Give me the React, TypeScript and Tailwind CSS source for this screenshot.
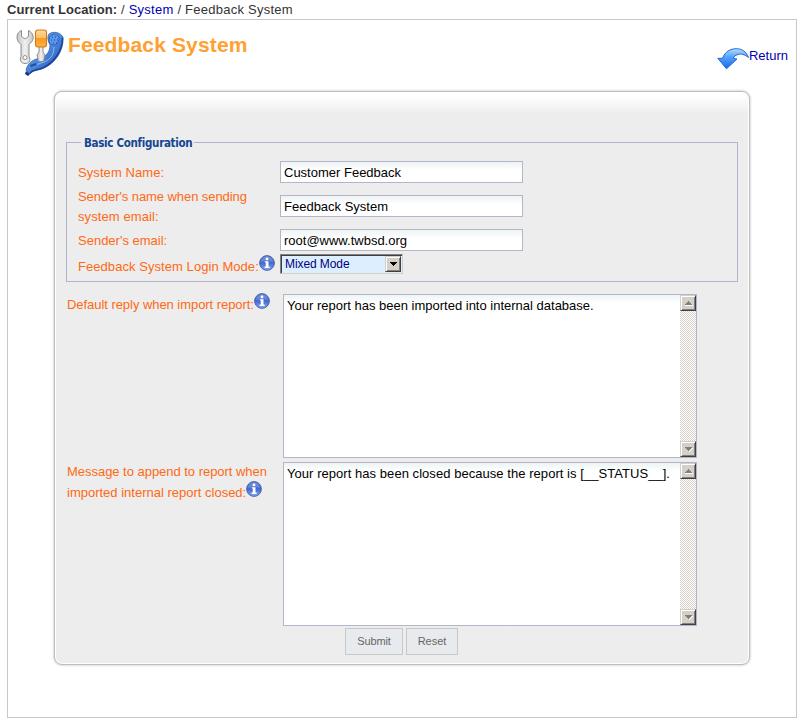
import type { ReactNode } from "react";

function InfoIcon({ className = "" }: { className?: string }) {
  return (
    <svg width="16" height="16" viewBox="0 0 16 16" className={`shrink-0 ${className}`}>
      <defs>
        <linearGradient id="info" x1="0" y1="0" x2="0" y2="1">
          <stop offset="0" stopColor="#5d7fd6" />
          <stop offset="0.5" stopColor="#4469d0" />
          <stop offset="1" stopColor="#83a8fb" />
        </linearGradient>
      </defs>
      <circle cx="8" cy="8" r="7.4" fill="url(#info)" stroke="#47609f" strokeWidth="0.9" />
      <path d="M2 7a6 5.4 0 0 1 12 0q-6-2-12 0z" fill="#fff" opacity="0.15" />
      <circle cx="8" cy="3.9" r="1.4" fill="#fff" />
      <path d="M5.8 6.2h3.7v5.400h1.100v1.400H5.600v-1.400h1.200V7.500H5.800z" fill="#fff" />
    </svg>
  );
}

function ToolsIcon() {
  return (
    <svg width="48" height="48" viewBox="0 0 48 48">
      <defs>
        <linearGradient id="steel" x1="0" x2="1">
          <stop offset="0" stopColor="#c4c4c4" />
          <stop offset="0.5" stopColor="#f0f0f0" />
          <stop offset="1" stopColor="#c6c6c6" />
        </linearGradient>
        <linearGradient id="handle" x1="0" y1="0" x2="0" y2="1">
          <stop offset="0" stopColor="#ffd9a0" />
          <stop offset="0.45" stopColor="#ffbd66" />
          <stop offset="0.5" stopColor="#f99a20" />
          <stop offset="1" stopColor="#ffb43e" />
        </linearGradient>
        <linearGradient id="phone" x1="0" y1="0" x2="1" y2="1">
          <stop offset="0" stopColor="#83b6f5" />
          <stop offset="0.55" stopColor="#4682dd" />
          <stop offset="1" stopColor="#1b429d" />
        </linearGradient>
      </defs>
      <path d="M33 5c4-3 11-2 14 3 1 14-8 26-19 31-6 3-11 1-14 6l-4-4c2-8 8-11 15-12 6-2 9-7 9-13-2-4-3-8-1-11z" fill="url(#phone)" stroke="#315faf" strokeWidth="0.8" />
      <path d="M46.500 9c0 13-9 25-19 29.500-6 3-10 1.500-13.500 5.500" fill="none" stroke="#1d4597" strokeWidth="1.600" />
      <path d="M38 18c0 9-5 14-13 16l-8 3" fill="none" stroke="#a1c8fa" strokeWidth="1" opacity="0.8" />
      <ellipse cx="38" cy="10.500" rx="5" ry="5.500" transform="rotate(30 38 10.500)" fill="#5d97e8" stroke="#2b60b8" strokeWidth="0.8" />
      <path d="M36 8h1M39 8h1M35 11h1M38 11h1M41 11h1M37 14h1M40 14h1" stroke="#174694" strokeWidth="1.200" />
      <path d="m14 36 6-2 1 2-6 2z" fill="#234e9c" />
      <path d="m10 42 4 3-2 2-3-2z" fill="#182e80" />
      <path d="M5.500 1.500v6l3.500 2.500 3.500-2.500v-6c5 2 6 8.500 3 11.500l-2.500 2.500v12c2.500 5-.5 7-4 7s-6-3-4-7V15.500L2.500 13C0 9 .5 3.500 5.500 1.500z" fill="url(#steel)" stroke="#8d8d8d" strokeWidth="1" />
      <circle cx="9" cy="28.500" r="2" fill="#fff" stroke="#777" strokeWidth="0.8" />
      <path d="M23 17h4v6l2 3-1.500 6.500h-5L21 26l2-3z" fill="url(#steel)" stroke="#888" strokeWidth="0.9" />
      <rect x="19.500" y="1" width="11" height="17" rx="2.400" fill="url(#handle)" stroke="#d07a1c" strokeWidth="1.100" />
    </svg>
  );
}

function ReturnIcon() {
  return (
    <svg width="32" height="22" viewBox="0 0 32 22" className="shrink-0">
      <defs>
        <linearGradient id="back" x1="0" y1="0" x2="0" y2="1">
          <stop offset="0" stopColor="#b9dcff" />
          <stop offset="0.4" stopColor="#55a4ff" />
          <stop offset="1" stopColor="#1467ed" />
        </linearGradient>
      </defs>
      <path d="M.8 10.300 5.500 10.300C8 3.800 13 .7 19.500 .7c5.500 0 10 3.200 12 8.800C28 6.700 24 5.400 21 6.500c-3 .8-4.200 2-4.500 4l3.500.5L9.500 20.800z" fill="url(#back)" stroke="#2368cf" strokeWidth="1" strokeLinejoin="round" />
    </svg>
  );
}

function TextField({ value }: { value: string }) {
  return (
    <input
      type="text"
      defaultValue={value}
      className="block h-[22px] w-[243px] border border-[#b4b4ca] bg-white bg-linear-to-b from-[#edf3f3] to-white to-40% px-[3px] text-[13px] text-black outline-none"
    />
  );
}

function ScrollButton({ up }: { up?: boolean }) {
  return (
    <div className="flex h-4 w-4 items-center justify-center border border-t-[#d4d0c8] border-r-[#404040] border-b-[#404040] border-l-[#d4d0c8] bg-[#d4d0c8] shadow-[inset_1px_1px_#fff,inset_-1px_-1px_#808080]">
      <svg width="9" height="6" viewBox="0 0 9 6" shapeRendering="crispEdges">
        <path d={up ? "M1 5h8v1H1z" : "m2 2 3 3 3-3h1L5 6z"} fill="#fff" />
        <path d={up ? "M4 1 0 5h8z" : "M0 1h8L4 5z"} fill="#808080" />
      </svg>
    </div>
  );
}

function MessageBox({ value, tracking }: { value: string; tracking: string }) {
  return (
    <div className="flex h-[164px] w-[414px] border border-[#b4b4ca] bg-white">
      <textarea
        defaultValue={value}
        className={`h-full w-[396px] resize-none overflow-hidden bg-linear-to-b from-[#edf3f3] to-white to-[8px] px-[3px] pt-[3px] text-[13px] leading-4 text-black outline-none ${tracking}`}
      />
      <div className="flex w-4 flex-col justify-between bg-[repeating-conic-gradient(#d4d0c8_0_25%,#fff_0_50%)] bg-[length:2px_2px]">
        <ScrollButton up />
        <ScrollButton />
      </div>
    </div>
  );
}

function Row({ label, className, children }: { label: ReactNode; className: string; children: ReactNode }) {
  return (
    <div className={`flex ${className}`}>
      <div className="w-[202px] shrink-0 whitespace-nowrap text-[#ff6914]">{label}</div>
      {children}
    </div>
  );
}

export default function App() {
  return (
    <div className="h-[726px] w-[806px] overflow-hidden bg-white font-['Liberation_Sans',Arial,sans-serif] text-[13px] leading-5 text-[#333]">
      <nav className="h-[19px] pl-[7px] leading-[19px] whitespace-pre">
        <b className="tracking-[0.06px]">Current Location:</b>
        <span className="tracking-[0.25px]"> / <a className="text-[#0000b4]">System</a> / Feedback System</span>
      </nav>
      <main className="ml-[7px] h-[699px] w-[790px] border border-[#c8c8c8]">
        <header className="flex h-[71px] justify-between pt-[9px] pr-2 pl-2">
          <div className="flex">
            <ToolsIcon />
            <h1 className="ml-1 pt-1 text-[21px] leading-6 font-bold tracking-[0.14px] text-[#ffa033]">Feedback System</h1>
          </div>
          <a className="mt-[19px] flex h-[22px] text-[#0000b4]">
            <ReturnIcon />
            <span className="-mt-[2px]">Return</span>
          </a>
        </header>
        <section className="ml-[46px] h-[574px] w-[696px] rounded-[8px] border border-[#bebebe] bg-[#ededed] bg-linear-to-b from-white from-[4px] to-[#ededed] to-[22px] pt-[50px] pl-[11px] shadow-[0_0_2px_1px_#ddd,inset_0_0_0_1px_#fff]">
          <div className="h-[140px] w-[672px] border border-[#b4b4c8]">
            <div className="ml-[14px] flex h-[18px] w-[113px] -translate-y-[9px] items-center bg-[#ededed] pl-[3px] font-['DejaVu_Sans_Condensed','DejaVu_Sans',sans-serif] text-[11.5px] font-bold tracking-[-0.31px] whitespace-nowrap text-[#144591]">
              Basic Configuration
            </div>
            <div className="pl-[11px]">
              <Row className="h-[26px]" label={<div className="pt-[2px] tracking-[0.08px]">System Name:</div>}>
                <TextField value="Customer Feedback" />
              </Row>
              <Row className="h-[42px]" label={<div className="tracking-[-0.08px]">Sender's name when sending<br /><span className="tracking-[0.1px]">system email:</span></div>}>
                <div className="pt-2"><TextField value="Feedback System" /></div>
              </Row>
              <Row className="h-[25px]" label={<div className="pt-[2px]">Sender's email:</div>}>
                <TextField value="root@www.twbsd.org" />
              </Row>
              <Row
                className="h-[22px]"
                label={<div className="flex"><span className="w-[181px] pt-[3px] tracking-[0.06px]">Feedback System Login Mode:</span><InfoIcon className="mt-px" /></div>}
              >
                <button className="flex h-[20px] w-[123px] items-center justify-between border border-t-[#808080] border-r-[#d4d0c8] border-b-[#d4d0c8] border-l-[#808080] bg-[#ddeeff] pr-px pl-1 text-[12px] text-[#00007d] shadow-[inset_1px_1px_#404040]">
                  <span className="tracking-[-0.08px]">Mixed Mode</span>
                  <span className="flex h-4 w-4 items-center justify-center border border-t-[#d4d0c8] border-r-[#404040] border-b-[#404040] border-l-[#d4d0c8] bg-[#d4d0c8] shadow-[inset_1px_1px_#fff,inset_-1px_-1px_#808080]">
                    <svg width="7" height="4" viewBox="0 0 7 4" shapeRendering="crispEdges"><path d="M0 0h7L3.500 4z" fill="#000" /></svg>
                  </span>
                </button>
              </Row>
            </div>
          </div>
          <div className="pt-3 pl-px">
            <div className="flex h-[168px]">
              <div className="flex w-[216px] whitespace-nowrap text-[#ff6914]">
                <span className="w-[187px] pt-px tracking-[-0.05px]">Default reply when import report:</span>
                <InfoIcon className="-mt-px" />
              </div>
              <MessageBox value="Your report has been imported into internal database." tracking="tracking-normal" />
            </div>
            <div className="flex h-[166px]">
              <div className="-mt-px w-[216px] leading-[21px] whitespace-nowrap text-[#ff6914]">
                <div className="tracking-[-0.03px]">Message to append to report when</div>
                <div className="flex"><span className="w-[179px]">imported internal report closed:</span><InfoIcon className="-mt-px" /></div>
              </div>
              <MessageBox value="Your report has been closed because the report is [__STATUS__]." tracking="tracking-[0.05px]" />
            </div>
            <div className="flex gap-[3px] pl-[278px] text-[11px] text-[#666]">
              <button className="h-[27px] w-[58px] border border-[#c8c8c8] bg-[#e7ebee] pb-[2px] tracking-[-0.1px]">Submit</button>
              <button className="h-[27px] w-[52px] border border-[#c8c8c8] bg-[#e7ebee] pb-[2px]">Reset</button>
            </div>
          </div>
        </section>
      </main>
    </div>
  );
}
